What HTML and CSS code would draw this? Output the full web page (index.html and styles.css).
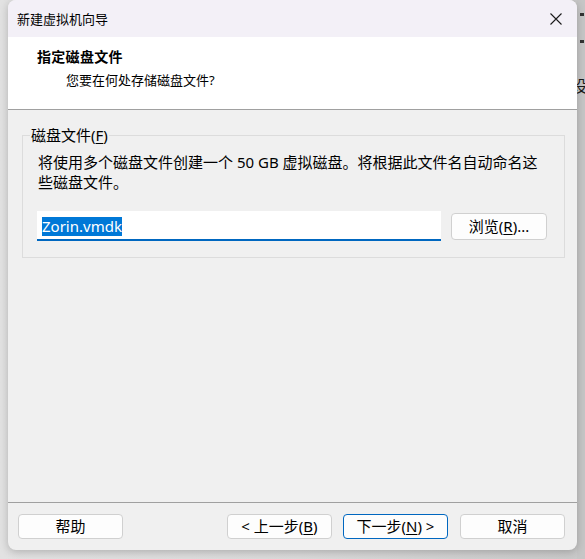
FILE: index.html
```html
<!DOCTYPE html>
<html lang="zh-CN">
<head>
<meta charset="utf-8">
<title>新建虚拟机向导</title>
<link rel="stylesheet" href="styles.css">
</head>
<body>
<div class="desktop">
  <div class="desk-bits">
    <span class="desk-dot d1"></span>
    <span class="desk-dot d2"></span>
    <span class="desk-char">设</span>
  </div>
  <div class="window">
    <div class="titlebar">
      <span class="title">新建虚拟机向导</span>
      <span class="close">
        <svg width="12" height="12" viewBox="0 0 12 12"><path d="M0.5 0.5 L11.5 11.5 M11.5 0.5 L0.5 11.5" stroke="#1b1b1b" stroke-width="1.1" fill="none"/></svg>
      </span>
    </div>
    <div class="header">
      <div class="h-title">指定磁盘文件</div>
      <div class="h-sub">您要在何处存储磁盘文件?</div>
    </div>
    <div class="content">
      <div class="group">
        <span class="group-label">磁盘文件(<u>F</u>)</span>
        <p class="desc">将使用多个磁盘文件创建一个 50 GB 虚拟磁盘。将根据此文件名自动命名这些磁盘文件。</p>
        <div class="file-row">
          <div class="textbox"><span class="sel">Zorin.vmdk</span></div>
          <button class="btn browse">浏览(<u>R</u>)...</button>
        </div>
      </div>
    </div>
    <div class="footer">
      <button class="btn">帮助</button>
      <div class="spacer"></div>
      <button class="btn">&lt; 上一步(<u>B</u>)</button>
      <button class="btn primary">下一步(<u>N</u>) &gt;</button>
      <button class="btn cancel">取消</button>
    </div>
  </div>
</div>
</body>
</html>
```

FILE: styles.css
```css
* { box-sizing: border-box; }
html, body {
  margin: 0;
  padding: 0;
}
body {
  width: 585px;
  height: 559px;
  overflow: hidden;
  background: linear-gradient(to right, #e2e2e2 0, #dadada 300px, #c9c9c9 585px);
  font-family: "Noto Sans", "Noto Sans CJK SC", sans-serif;
  color: #000;
}
.desktop {
  position: relative;
  width: 585px;
  height: 559px;
}
.desk-bits {
  position: absolute;
  left: 577px;
  top: 0;
  width: 8px;
  height: 559px;
  background: #c6c6c6;
  overflow: hidden;
}
.desk-dot {
  position: absolute;
  left: 3px;
  width: 4px;
  height: 3px;
  background: #333;
}
.desk-dot.d1 { top: 13px; }
.desk-dot.d2 { top: 40px; }
.desk-char {
  position: absolute;
  left: -6px;
  top: 76px;
  font-size: 16px;
  line-height: 20px;
  color: #1a1a1a;
}
.window {
  margin-left: 8px;
  width: 569px;
  height: 550px;
  background: #f0f0f0;
  border-radius: 8px;
  overflow: hidden;
  box-shadow: 0 2px 8px rgba(0, 0, 0, 0.22);
  display: flex;
  flex-direction: column;
  position: relative;
}
.titlebar {
  height: 37px;
  flex: none;
  background: #f3f0f7;
  display: flex;
  align-items: center;
  padding-left: 9px;
  padding-right: 15px;
  padding-top: 1px;
}
.title {
  flex: 1;
  font-size: 13px;
  line-height: 18px;
}
.close {
  width: 12px;
  height: 12px;
  display: flex;
}
.header {
  height: 73px;
  flex: none;
  background: #fff;
  border-bottom: 1px solid #a0a0a0;
  padding-top: 11px;
}
.h-title {
  margin-left: 29px;
  font-size: 14px;
  font-weight: 700;
  line-height: 18px;
  letter-spacing: 0.3px;
}
.h-sub {
  margin-left: 58px;
  margin-top: 5px;
  font-size: 13px;
  line-height: 18px;
}
.content {
  flex: 1;
  padding: 25px 12px 0 14px;
}
.group {
  border: 1px solid #dcdcdc;
  padding: 0 15px 16px 15px;
}
.group-label {
  display: block;
  width: fit-content;
  margin-top: -11px;
  margin-left: -8px;
  padding: 0 1px;
  background: #f0f0f0;
  font-size: 15px;
  line-height: 20px;
}
.desc {
  margin: 7px 0 0 0;
  font-size: 15px;
  line-height: 20px;
  width: 512px;
}
.file-row {
  display: flex;
  align-items: center;
  margin-top: 19px;
  margin-left: -1px;
}
.textbox {
  width: 404px;
  height: 30px;
  background: #fff;
  border-bottom: 2px solid #0067c0;
  padding: 2px 0 0 5px;
  display: flex;
  align-items: center;
}
.sel {
  background: #0078d7;
  color: #fff;
  font-size: 15px;
  line-height: 19px;
}
.btn {
  font-family: "Noto Sans", "Noto Sans CJK SC", sans-serif;
  font-size: 15px;
  line-height: 19px;
  color: #000;
  background: #fdfdfd;
  border: 1px solid #d0d0d0;
  border-radius: 4px;
  width: 105px;
  height: 25px;
  padding: 0;
}
.browse {
  margin-left: 10px;
  width: 96px;
  height: 27px;
}
.footer {
  flex: none;
  height: 48px;
  border-top: 1px solid #a0a0a0;
  display: flex;
  align-items: flex-start;
  padding: 11px 12px 0 10px;
  gap: 11px;
}
.spacer { flex: 1; }
.btn.primary {
  border-color: #0067c0;
}
.btn.cancel {
  margin-left: 1px;
}
u { text-underline-offset: 2px; }
```
